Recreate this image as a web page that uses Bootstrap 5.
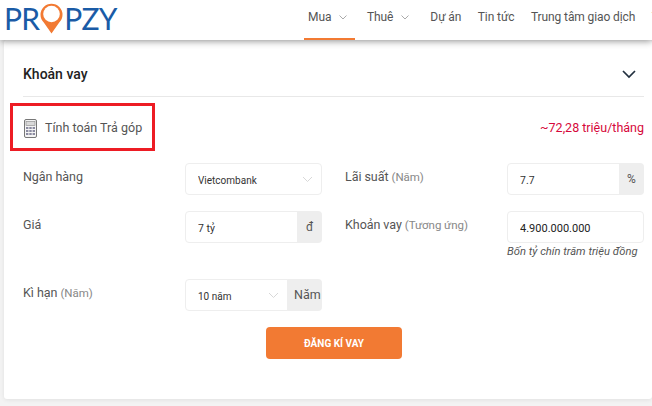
<!DOCTYPE html>
<html lang="vi">
<head>
<meta charset="utf-8">
<title>Propzy</title>
<link href="https://cdn.jsdelivr.net/npm/bootstrap@5.3.0/dist/css/bootstrap.min.css" rel="stylesheet">
<style>
html,body{height:100%;overflow:hidden}
body{background:#f3f3f3;font-family:Roboto,"Liberation Sans",sans-serif;font-size:13px;color:#555}
.top-bar{height:40px;background:#fff;box-shadow:0 1px 7px rgba(0,0,0,.45);position:relative;z-index:2;white-space:nowrap;overflow:hidden;padding-left:4px}
.brand-logo{font-family:Lato,"Liberation Sans",sans-serif;font-size:30px;letter-spacing:-.8px;line-height:1;color:#1a5ba6;width:300px;height:40px;flex:none;margin-top:-4px}
.brand-logo svg{width:25px;height:34px;margin:0;flex:none}
.top-link{height:40px;font-size:12px;letter-spacing:-.1px;color:#555;text-decoration:none;display:flex;align-items:center;padding-bottom:6px;flex:none}
.top-link.is-on{border-bottom:2px solid #f27a33;padding-bottom:4px;padding-left:4px;width:51px}
.top-link svg{width:8px;height:5px;margin-left:8px}
.gap-m{margin-left:12px}
.gap-l{margin-left:21px}
.gap-s{margin-left:16.5px}
.sheet{margin:0 0 0 3.5px;height:359px;background:#fff;border-radius:3px;box-shadow:0 1px 4px rgba(0,0,0,.08);padding:0 0 0 19.5px}
.sheet-in{width:621px}
.sheet-head{height:57px;border-bottom:1px solid #e8e8e8;color:#222;font-weight:500;font-size:14px;padding:12px 8px 0 0}
.calc-row{height:66px;padding-top:6px}
.calc-box{width:145px;height:48px;border:3px solid #ed1c24;margin-left:-13px;padding:2px 0 0 11px;color:#555;font-size:12.5px}
.calc-price{color:#d6083b;font-size:12.5px;height:48px;padding-top:2px}
.form-zone{display:grid;grid-template-columns:162px 137px 23px 162px 137px;grid-template-rows:32px 32px 52px;row-gap:16px}
.field-tag{font-size:12.5px;letter-spacing:-.05px;color:#555;padding-top:5px}
.field-tag span{color:#888;font-size:11.5px}
.fld{height:32px;flex-wrap:nowrap}
.fld .form-control,.fld .form-select{height:32px;min-height:32px;font-size:10.5px;color:#333;border-color:#eee;padding:2px 0 0 12px;border-radius:4px;box-shadow:none}
.fld .form-select{font-size:10px;background-size:11px 7px;background-position:right 8px center;background-image:url("data:image/svg+xml,%3Csvg xmlns='http://www.w3.org/2000/svg' viewBox='0 0 11 7'%3E%3Cpath d='M1 1l4.5 4.5L10 1' fill='none' stroke='%23d8d8d8'/%3E%3C/svg%3E")}
.fld .amount-in{font-size:11px;color:#222}
.fld .input-group-text{background:#eee;border:0;font-size:12px;color:#555;padding:0;justify-content:center;border-radius:0 4px 4px 0}
.fld .unit-a{width:25px}
.fld .unit-b{width:35px;font-size:12.5px;padding-left:7px;justify-content:flex-start}
.spell-note{font-size:11.2px;font-style:italic;color:#555;white-space:nowrap;line-height:14px;margin-top:2px}
.row-gap-extra{margin-top:20px}
.send-btn{display:block;width:136px;height:32px;margin:16px 0 0 243px;background:#f27a33;border:0;border-radius:4px;color:#fff;font-size:10px;font-weight:700;padding:0}
</style>
</head>
<body>
<header class="top-bar d-flex align-items-center">
  <div class="brand-logo d-flex align-items-center">PR<svg viewBox="0 0 25 34" aria-hidden="true"><path d="M12.5 32.5 4.8 21.5A11 11 0 1 1 20.2 21.5Z" fill="#f27a33"/><circle cx="12.5" cy="13" r="8.3" fill="#fff"/></svg>PZY</div>
  <a class="top-link is-on" href="#">Mua<svg viewBox="0 0 8 5"><path d="M.5.5 4 4 7.5.5" fill="none" stroke="#aaa"/></svg></a>
  <a class="top-link gap-m" href="#">Thuê<svg viewBox="0 0 8 5"><path d="M.5.5 4 4 7.5.5" fill="none" stroke="#aaa"/></svg></a>
  <a class="top-link gap-l" href="#">Dự án</a>
  <a class="top-link gap-s" href="#">Tin tức</a>
  <a class="top-link gap-s" href="#">Trung tâm giao dịch</a>
  <a class="top-link gap-s" href="#">Tiện ích</a>
</header>
<main class="sheet">
  <div class="sheet-in">
    <div class="sheet-head d-flex justify-content-between align-items-center">
      <span>Khoản vay</span>
      <svg width="14" height="9" viewBox="0 0 14 9" aria-hidden="true"><path d="M1 1l6 6 6-6" fill="none" stroke="#22303f" stroke-width="1.7"/></svg>
    </div>
    <div class="calc-row d-flex justify-content-between">
      <div class="calc-box d-flex align-items-center gap-2">
        <svg width="13" height="19" viewBox="0 0 13 19" aria-hidden="true"><rect x=".5" y=".5" width="12" height="18" rx="1.5" fill="#f4f4f4" stroke="#777"/><rect x="2" y="2.5" width="9" height="4" fill="#d9d9d9" stroke="#888" stroke-width=".6"/><g fill="#8a8aa0"><rect x="2" y="8" width="2.4" height="2"/><rect x="5.3" y="8" width="2.4" height="2"/><rect x="8.6" y="8" width="2.4" height="2"/><rect x="2" y="11" width="2.4" height="2"/><rect x="5.3" y="11" width="2.4" height="2"/><rect x="8.6" y="11" width="2.4" height="2"/><rect x="2" y="14" width="2.4" height="2"/><rect x="5.3" y="14" width="2.4" height="2"/><rect x="8.6" y="14" width="2.4" height="2"/></g></svg>
        <span>Tính toán Trả góp</span>
      </div>
      <div class="calc-price d-flex align-items-center">~72,28 triệu/tháng</div>
    </div>
    <div class="form-zone">
      <div class="field-tag">Ngân hàng</div>
      <div class="input-group fld"><select class="form-select"><option>Vietcombank</option></select></div>
      <div></div>
      <div class="field-tag">Lãi suất <span>(Năm)</span></div>
      <div class="input-group fld"><input class="form-control" value="7.7"><span class="input-group-text unit-a">%</span></div>

      <div class="field-tag">Giá</div>
      <div class="input-group fld"><input class="form-control" value="7 tỷ"><span class="input-group-text unit-a">đ</span></div>
      <div></div>
      <div class="field-tag">Khoản vay <span>(Tương ứng)</span></div>
      <div>
        <div class="input-group fld"><input class="form-control amount-in" value="4.900.000.000"></div>
        <div class="spell-note">Bốn tỷ chín trăm triệu đồng</div>
      </div>

      <div class="field-tag row-gap-extra">Kì hạn <span>(Năm)</span></div>
      <div class="input-group fld row-gap-extra"><select class="form-select"><option>10 năm</option></select><span class="input-group-text unit-b">Năm</span></div>
    </div>
    <button class="send-btn" type="button">ĐĂNG KÍ VAY</button>
  </div>
</main>
<script src="https://cdn.jsdelivr.net/npm/bootstrap@5.3.0/dist/js/bootstrap.bundle.min.js"></script>
</body>
</html>
